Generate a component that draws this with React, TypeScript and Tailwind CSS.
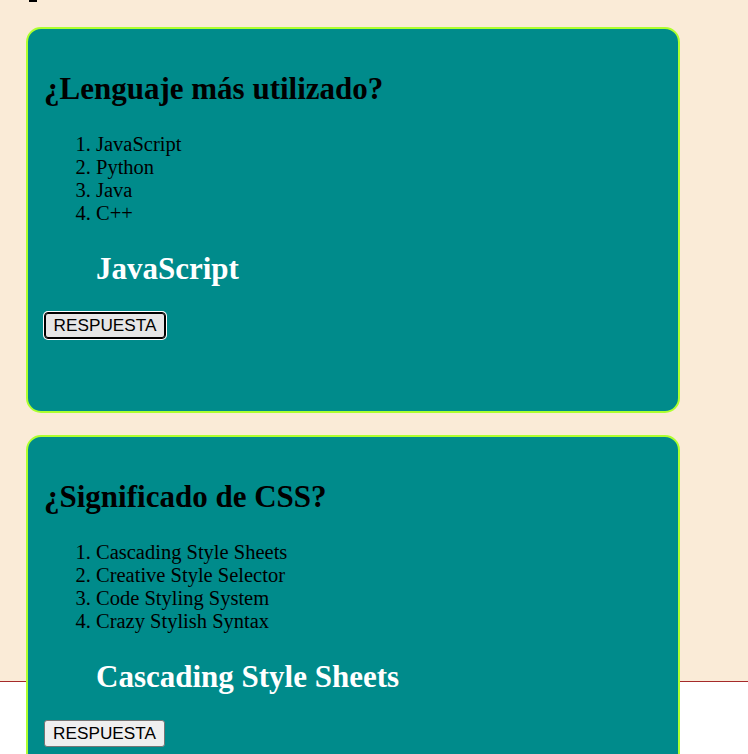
import React from "react";

type Q = { q: string; opts: string[]; a: string; focused?: boolean };

const data: Q[] = [
  { q: "¿Lenguaje más utilizado?", opts: ["JavaScript", "Python", "Java", "C++"], a: "JavaScript", focused: true },
  {
    q: "¿Significado de CSS?",
    opts: ["Cascading Style Sheets", "Creative Style Selector", "Code Styling System", "Crazy Stylish Syntax"],
    a: "Cascading Style Sheets",
  },
];

function Card({ item, first }: { item: Q; first: boolean }) {
  return (
    <div
      className={`${first ? "mt-[25px]" : "mt-[22px]"} ml-[26px] w-[654px] h-[386px] shrink-0 rounded-[15px] border-2 border-[#adff2f] bg-[#008b8b] px-[16px] pt-[16px]`}
    >
      <h2 className="mt-[27px] text-[31px] leading-[34.5px] font-bold text-black">{item.q}</h2>
      <ol className="mt-[26px] list-decimal pl-[52px] text-[20.5px] leading-[23px] text-black">
        {item.opts.map((o) => (
          <li key={o}>{o}</li>
        ))}
      </ol>
      <h2 className="mt-[27px] pl-[52px] text-[31px] leading-[34.5px] font-bold text-white">{item.a}</h2>
      <button
        className={
          item.focused
            ? "mt-[26px] block h-[27px] w-[122px] rounded-[4px] border border-black bg-[#e6e6e6] text-center text-[17.2px] leading-[19px] text-black shadow-[inset_0_0_0_1px_#000,0_0_0_1px_#fff] [font-family:'Liberation_Sans',Arial,sans-serif]"
            : "mt-[26px] block h-[27px] w-[121px] rounded-[3px] border border-[#767676] bg-[#efefef] text-center text-[17.2px] leading-[19px] text-black [font-family:'Liberation_Sans',Arial,sans-serif]"
        }
      >
        RESPUESTA
      </button>
    </div>
  );
}

export default function App() {
  return (
    <div className="min-h-[754px] bg-white [font-family:'Liberation_Serif','Times_New_Roman',serif]">
      <div className="flex h-[682px] flex-col border-b border-[#a52a2a] bg-[#faebd7]">
        <div className="ml-[29px] h-[2px] w-[8px] shrink-0 bg-black" />
        {data.map((d, i) => (
          <Card key={i} item={d} first={i === 0} />
        ))}
      </div>
    </div>
  );
}
